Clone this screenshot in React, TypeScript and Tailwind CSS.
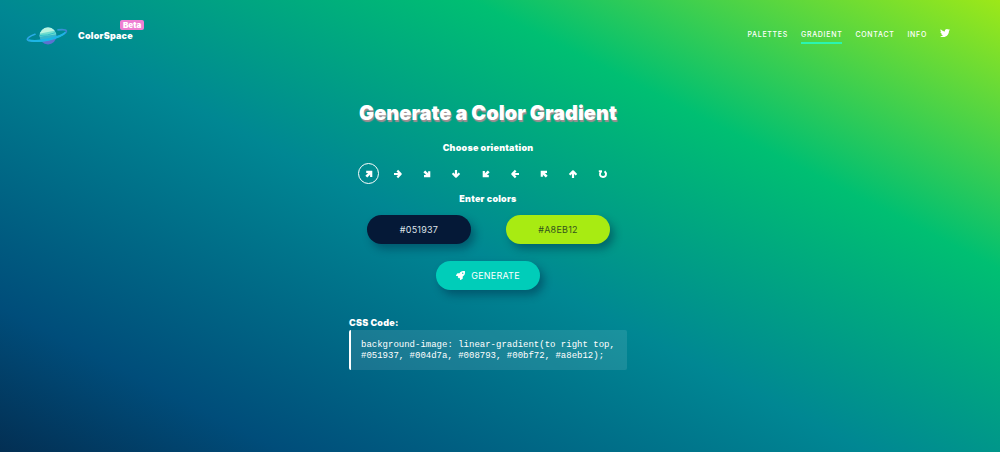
import { useState } from 'react';
import { FaRocket, FaTwitter } from 'react-icons/fa';

const directions = [
  { name: 'to right top', angle: 45 },
  { name: 'to right', angle: 90 },
  { name: 'to right bottom', angle: 135 },
  { name: 'to bottom', angle: 180 },
  { name: 'to left bottom', angle: 225 },
  { name: 'to left', angle: 270 },
  { name: 'to left top', angle: 315 },
  { name: 'to top', angle: 0 },
];

const links = ['PALETTES', 'GRADIENT', 'CONTACT', 'INFO'];

function Planet() {
  return (
    <svg viewBox="0 0 42 20" className="h-5 w-[42px]" aria-hidden="true">
      <defs>
        <linearGradient id="ring" x1="0" x2="1">
          <stop offset="0" stopColor="#2fa4e6" />
          <stop offset=".5" stopColor="#16bce4" />
          <stop offset="1" stopColor="#3f83cf" />
        </linearGradient>
        <clipPath id="ball">
          <circle cx="22" cy="10" r="8.4" />
        </clipPath>
      </defs>
      <g clipPath="url(#ball)">
        <rect x="12" width="20" height="20" fill="#5c72d0" />
        <path d="M12 0h20v11L12 15z" fill="#35b6cb" />
        <path d="M12 0h20v8L12 11z" fill="#6fdccf" />
        <path d="M12 0h20v4L12 8z" fill="#b9f4df" />
        <path d="M13 9.5q8 .5 17-3" stroke="#2fc0cb" strokeWidth="1" fill="none" />
      </g>
      <path
        d="M9 8.2C3.8 10 .8 12.2 1.4 13.8c.8 2.200 11 1.800 21.400-.5S41 7.200 40.400 4.900c-.4-1.300-3.800-1.500-8.400-1"
        fill="none"
        stroke="url(#ring)"
        strokeWidth="1.6"
        strokeLinecap="round"
      />
      <path d="M2.500 13.800c4 1.200 12 .8 20-1S37.500 8.600 39.500 6.200C37 10 30 12.600 22.800 14.200S5.500 16.200 2.500 13.800z" fill="#1cb6e6" stroke="#1cb6e6" strokeWidth="1.2" />
    </svg>
  );
}

function Arrow({ angle }: { angle: number }) {
  const diagonal = angle % 90 !== 0;
  return (
    <svg viewBox="0 0 10 10" className="size-[10px]" fill="none" stroke="currentColor" strokeWidth="2.2" aria-hidden="true">
      <g transform={`rotate(${diagonal ? angle - 45 : angle} 5 5)`}>
        {diagonal ? (
          <>
            <path d="M2.2 2.8H7.2V8" />
            <path d="M7 3 2.3 7.7" strokeWidth="2.6" />
          </>
        ) : (
          <path d="M5 9V2.5M1.6 5.7 5 2.3l3.4 3.4" strokeLinejoin="round" />
        )}
      </g>
    </svg>
  );
}

export default function App() {
  const [direction, setDirection] = useState('to right top');
  const ring = (name: string) =>
    direction === name
      ? 'grid size-[21px] place-items-center rounded-full border border-white'
      : 'grid size-[21px] place-items-center rounded-full border border-transparent';

  return (
    <div className="min-h-screen bg-[linear-gradient(27deg,#051937_-11%,#004d7a_15%,#008793_46%,#00bf72_72%,#a8eb12_102%)] font-['Inter','Liberation_Sans',sans-serif] text-white">
      <header className="flex items-start justify-between pt-5 pr-[50px] pl-[26px]">
        <a href="#home" className="flex items-start">
          <span className="mt-[6px]">
            <Planet />
          </span>
          <span className="mt-[9px] ml-[10px] text-[9px] leading-[14px] font-black tracking-wide">ColorSpace</span>
          <span className="-ml-[13px] rounded-xs bg-[#ee7fd2] px-[3px] text-[8px] leading-[10px] font-black">Beta</span>
        </a>
        <nav className="flex gap-[13px] pt-2">
          {links.map((link) => (
            <a
              key={link}
              href={`#${link.toLowerCase()}`}
              className={
                link === 'GRADIENT'
                  ? 'border-b-2 border-[#2af5b0] pb-px text-[7px] leading-[13px] font-medium tracking-widest'
                  : 'pb-px text-[7px] leading-[13px] font-medium tracking-widest'
              }
            >
              {link}
            </a>
          ))}
          <a href="#twitter" aria-label="Twitter">
            <FaTwitter className="size-[10px]" />
          </a>
        </nav>
      </header>

      <main className="mx-auto w-[278px] max-w-full -translate-x-3 pt-[55px]">
        <h1 className="text-center text-[20px] leading-6 font-black whitespace-nowrap [text-shadow:1px_2px_1px_#a58d92]">
          Generate a Color Gradient
        </h1>
        <h2 className="mt-[17px] text-center text-[9px] leading-3 font-black tracking-wide">Choose orientation</h2>
        <div className="mt-[9px] flex justify-between pr-[14px] pl-[9px]">
          {directions.map(({ name, angle }) => (
            <button key={name} type="button" aria-label={name} onClick={() => setDirection(name)} className={ring(name)}>
              <Arrow angle={angle} />
            </button>
          ))}
          <button type="button" aria-label="circle" onClick={() => setDirection('circle')} className={ring('circle')}>
            <svg viewBox="0 0 10 10" className="size-[10px]" fill="none" stroke="currentColor" strokeWidth="1.9" aria-hidden="true">
              <path d="M3.2 2.4C.8 5 2 8 5 8s4.200-3.400 1.600-5.800" />
              <path d="M.8 2.200h3.200" strokeWidth="1.800" />
            </svg>
          </button>
        </div>
        <h2 className="mt-[9px] text-center text-[9px] leading-3 font-black tracking-wide">Enter colors</h2>
        <div className="mt-[10px] flex justify-between pr-[17px] pl-[18px]">
          <input
            aria-label="First color"
            defaultValue="#051937"
            className="h-[29px] w-[104px] rounded-full bg-[#051937] text-center text-[9px] tracking-wide text-[#dde2e8] shadow-[4px_5px_8px_rgba(0,30,60,0.4)]"
          />
          <input
            aria-label="Second color"
            defaultValue="#A8EB12"
            className="h-[29px] w-[104px] rounded-full bg-[#a8eb12] text-center text-[9px] tracking-wide text-[#34541e] shadow-[4px_5px_8px_rgba(0,30,60,0.4)]"
          />
        </div>
        <button
          type="button"
          className="mx-auto mt-[17px] flex h-[29px] w-[104px] items-center justify-center gap-[6px] rounded-full bg-[#00cdb9] text-[9px] tracking-wide shadow-[4px_5px_8px_rgba(0,30,60,0.4)]"
        >
          <FaRocket className="size-[9px]" />
          GENERATE
        </button>
        <h3 className="mt-[27px] text-[9px] leading-3 font-black tracking-wide">CSS Code:</h3>
        <pre className="mt-px rounded-xs border-l-2 border-white bg-white/10 pt-[10px] pb-[8px] pl-[10px] font-['Liberation_Mono',monospace] text-[9px] leading-[11px] whitespace-pre-wrap">
          <code>{`background-image: linear-gradient(${direction},\n#051937, #004d7a, #008793, #00bf72, #a8eb12);`}</code>
        </pre>
      </main>
    </div>
  );
}
